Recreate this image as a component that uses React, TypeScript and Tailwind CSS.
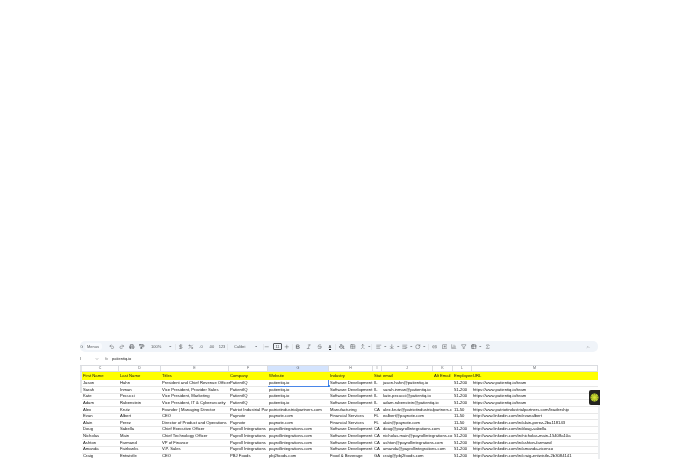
import {
  Search, Undo2, Redo2, Printer, PaintRoller, ChevronDown, ChevronUp, Minus, Plus, Bold, Italic, Strikethrough,
  PaintBucket, Grid2x2, Merge, AlignLeft, ArrowDownToLine, WrapText, RotateCw, Link2, MessageSquarePlus, ChartColumn,
  Filter, Table2, Sigma, DollarSign, Percent,
} from 'lucide-react'

const COLS = ['C', 'D', 'E', 'F', 'G', 'H', 'I', 'J', 'K', 'L', 'M']
const HEAD = ['First Name', 'Last Name', 'Titles', 'Company', 'Website', 'Industry', 'Stat', 'email', 'Alt Email', 'Employee', 'URL']
const GRID = 'grid grid-cols-[37px_42px_68px_39px_61px_44px_9px_51px_20px_19px_126px]'

const SD = 'Software Development'
const PI = 'Payroll Integrations'
const PIW = 'payrollintegrations.com'
const FS = 'Financial Services'
const LI = 'http://www.linkedin.com/in/'

const ROWS = [
  ['Jason', 'Hahn', 'President and Chief Revenue Officer', 'PatientIQ', 'patientiq.io', SD, 'IL', 'jason.hahn@patientiq.io', '', '51-200', 'https://www.patientiq.io/team'],
  ['Sarah', 'Inman', 'Vice President, Provider Sales', 'PatientIQ', 'patientiq.io', SD, 'IL', 'sarah.inman@patientiq.io', '', '51-200', 'https://www.patientiq.io/team'],
  ['Kate', 'Pecucci', 'Vice President, Marketing', 'PatientIQ', 'patientiq.io', SD, 'IL', 'kate.pecucci@patientiq.io', '', '51-200', 'https://www.patientiq.io/team'],
  ['Adam', 'Rubenstein', 'Vice President, IT & Cybersecurity', 'PatientIQ', 'patientiq.io', SD, 'IL', 'adam.rubenstein@patientiq.io', '', '51-200', 'https://www.patientiq.io/team'],
  ['Alex', 'Krutz', 'Founder | Managing Director', 'Patriot Industrial Par', 'patriotindustrialpartners.com', 'Manufacturing', 'CA', 'alex.krutz@patriotindustrialpartners.c', '', '11-50', 'https://www.patriotindustrialpartners.com/leadership'],
  ['Evan', 'Albert', 'CEO', 'Paynote', 'paynote.com', FS, 'FL', 'ealbert@paynote.com', '', '11-50', LI + 'evanalbert'],
  ['Alain', 'Perez', 'Director of Product and Operations', 'Paynote', 'paynote.com', FS, 'FL', 'alain@paynote.com', '', '11-50', LI + 'alain-perez-2ba118143'],
  ['Doug', 'Sabella', 'Chief Executive Officer', PI, PIW, SD, 'CA', 'doug@payrollintegrations.com', '', '51-200', LI + 'doug-sabella'],
  ['Nicholas', 'Main', 'Chief Technology Officer', PI, PIW, SD, 'CA', 'nicholas.main@payrollintegrations.co', '', '51-200', LI + 'nicholas-main-15408a10a'],
  ['Ashton', 'Farmand', 'VP of Finance', PI, PIW, SD, 'CA', 'ashton@payrollintegrations.com', '', '51-200', LI + 'ashton-farmand'],
  ['Amanda', 'Fairbanks', 'V.P. Sales', PI, PIW, SD, 'CA', 'amanda@payrollintegrations.com', '', '51-200', LI + 'amanda-vicenco'],
  ['Craig', 'Entwistle', 'CEO', 'PBJ Foods', 'pbj2foods.com', 'Food & Beverage', 'GA', 'craig@pbj2foods.com', '', '51-200', LI + 'craig-entwistle-2b3084141'],
]

const ic = 'w-[5.5px] h-[5.5px]'

function Btn({ w, children }: { w: string; children: React.ReactNode }) {
  return <div className={`${w} flex items-center justify-center shrink-0`}>{children}</div>
}

function Sep() {
  return <div className="w-px h-[6px] bg-[#e4e7eb] shrink-0" />
}

function Caret() {
  return (
    <div className="w-[3px] flex justify-center shrink-0">
      <svg viewBox="0 0 4 2" className="w-[2.5px] h-[1.5px]"><path d="M0 0h4L2 2z" fill="#5f6368" /></svg>
    </div>
  )
}

function Toolbar() {
  return (
    <div className="ml-[80px] w-[518px] h-[11px] rounded-[5px] bg-[#f0f4f9] flex items-center text-[4px] text-[#55585b] blur-[0.3px]">
      <Btn w="w-[3px]"><Search className="w-[3.5px] h-[3.5px] shrink-0" /></Btn>
      <span className="ml-[2px] w-[17px] h-[7px] rounded-[3px] bg-[#f8fafd] flex items-center pl-[2px] shrink-0">Menus</span>
      <div className="w-[5px] shrink-0" />
      <Btn w="w-[10px]"><Undo2 className={ic} /></Btn>
      <Btn w="w-[10px]"><Redo2 className={ic} /></Btn>
      <Btn w="w-[10px]"><Printer className={ic} strokeWidth={2.5} /></Btn>
      <Btn w="w-[10px]"><PaintRoller className={ic} strokeWidth={2.5} /></Btn>
      <span className="ml-[4px] w-[13px] shrink-0">100%</span>
      <div className="ml-[2px] w-[3px] shrink-0" />
      <Caret />
      <div className="w-[3px] shrink-0" />
      <Sep />
      <Btn w="w-[10px]"><DollarSign className={ic} /></Btn>
      <Btn w="w-[10px]"><Percent className={ic} /></Btn>
      <Btn w="w-[10px]"><span>.0</span></Btn>
      <Btn w="w-[11px]"><span>.00</span></Btn>
      <Btn w="w-[10px]"><span>123</span></Btn>
      <Sep />
      <span className="ml-[6px] w-[20px] shrink-0">Calibri</span>
      <Btn w="w-[4px]"><Caret /></Btn>
      <div className="w-[5px] shrink-0" />
      <Sep />
      <Btn w="w-[6px]"><Minus className={ic} /></Btn>
      <div className="ml-[3px] w-[9px] h-[7px] border-[0.5px] border-[#55585b] rounded-[1px] flex items-center justify-center shrink-0">11</div>
      <Btn w="w-[10px]"><Plus className={ic} /></Btn>
      <Sep />
      <Btn w="w-[10px]"><Bold className={ic} strokeWidth={3} /></Btn>
      <Btn w="w-[11px]"><Italic className={ic} /></Btn>
      <Btn w="w-[11px]"><Strikethrough className={ic} /></Btn>
      <Btn w="w-[10px]">
        <span className="border-b border-[#111] leading-[5px] font-bold">A</span>
      </Btn>
      <Sep />
      <Btn w="w-[12px]"><PaintBucket className={ic} strokeWidth={2.5} /></Btn>
      <Btn w="w-[10px]"><Grid2x2 className={ic} /></Btn>
      <Btn w="w-[10px]"><Merge className={ic} /></Btn>
      <Caret />
      <Sep />
      <Btn w="ml-[2px] w-[10px]"><AlignLeft className={ic} /></Btn>
      <Caret />
      <Btn w="w-[10px]"><ArrowDownToLine className={ic} /></Btn>
      <Caret />
      <Btn w="w-[10px]"><WrapText className={ic} /></Btn>
      <Caret />
      <Btn w="w-[10px]"><RotateCw className={ic} /></Btn>
      <Caret />
      <div className="w-[2px] shrink-0" />
      <Sep />
      <Btn w="w-[11px]"><Link2 className={ic} /></Btn>
      <Btn w="w-[9px]"><MessageSquarePlus className={ic} /></Btn>
      <Btn w="w-[10px]"><ChartColumn className={ic} /></Btn>
      <Btn w="w-[10px]"><Filter className={ic} /></Btn>
      <Btn w="w-[10px]"><Table2 className={ic} strokeWidth={2.5} /></Btn>
      <Caret />
      <Btn w="ml-[1px] w-[10px]"><Sigma className={ic} /></Btn>
      <div className="flex-1" />
      <ChevronUp className="w-[4px] h-[4px] mr-[8px] shrink-0" />
    </div>
  )
}

function FormulaBar() {
  return (
    <div className="ml-[80px] mt-[3px] w-[518px] h-[8px] flex items-center text-[4px] text-[#444746]">
      <span className="w-[1px] shrink-0">I</span>
      <ChevronDown className="ml-[14px] w-[4px] h-[4px] shrink-0" />
      <div className="w-[6px] shrink-0" />
      <span className="italic text-[#777] w-[7px] shrink-0">fx</span>
      <span className="text-[#222]">patientiq.io</span>
    </div>
  )
}

function Sheet() {
  return (
    <div className="ml-[80px] w-[518px] mt-[2px] text-[4.2px] text-[#111] flex flex-col">
      <div className="flex h-[7px] bg-white border-y-[0.5px] border-[#dadce0]">
        <div className="w-[2px] bg-[#e3e5e8] shrink-0" />
        <div className={GRID}>
          {COLS.map(c => (
            <div key={c} className={`flex items-center justify-center text-[3.6px] text-[#5f6368] border-r-[0.5px] border-[#dadce0] ${c === 'G' ? 'bg-[#d3e3fd]' : ''}`}>
              {c}
            </div>
          ))}
        </div>
      </div>
      <div className="flex h-[8px]">
        <div className="w-[2px] bg-[#e3e5e8] shrink-0" />
        <div className={`${GRID} bg-[#ffff00]`}>
          {HEAD.map((h, i) => (
            <div key={i} className="pl-[1px] leading-[8px] whitespace-nowrap text-[#111]">{h}</div>
          ))}
        </div>
      </div>
      {ROWS.map((r, i) => (
        <div key={i} className="flex h-[6.65px]">
          <div className={`w-[2px] shrink-0 ${i < 2 ? 'bg-[#e3e5e8]' : ''}`} />
          <div className={GRID}>
            {r.map((v, j) => {
              // column K is empty, so the email runs on into it
              if (j === 8) return null
              const wide = j === 7 ? 'col-span-2' : ''
              const selected = i === 0 && j === 4 ? 'border-b-[0.5px] border-r-[0.5px] border-[#4a86e8]' : 'border-b-[0.5px] border-[#e8e8e8]'
              return (
                <div key={j} className={`pl-[1px] leading-[6.2px] whitespace-nowrap ${wide} ${selected}`}>
                  {v}
                </div>
              )
            })}
          </div>
        </div>
      ))}
    </div>
  )
}

function SideWidget() {
  return (
    <div className="absolute left-[589px] top-[390px] w-[11px] h-[15px] bg-[#23231f] rounded-l-[2px] flex items-center justify-center">
      <svg viewBox="0 0 20 20" className="w-[9px] h-[9px]">
        {[0, 45, 90, 135].map(a => (
          <rect key={a} x="7.5" y="1" width="5" height="18" fill="#b7cc2c" transform={`rotate(${a} 10 10)`} />
        ))}
        <circle cx="10" cy="10" r="3" fill="#dce03a" />
      </svg>
    </div>
  )
}

export default function App() {
  return (
    <div className="relative w-[680px] h-[459px] overflow-hidden bg-white font-['Liberation_Sans',sans-serif]">
      <div className="h-[341px]" />
      <Toolbar />
      <div className="blur-[0.25px]">
        <FormulaBar />
        <Sheet />
      </div>
      <div className="absolute left-[328px] top-[385px] w-[2px] h-[2px] rounded-full bg-[#1a73e8]" />
      <div className="absolute left-[598px] top-[405px] w-[2px] h-[54px] bg-[#eceef0]" />
      <SideWidget />
    </div>
  )
}
